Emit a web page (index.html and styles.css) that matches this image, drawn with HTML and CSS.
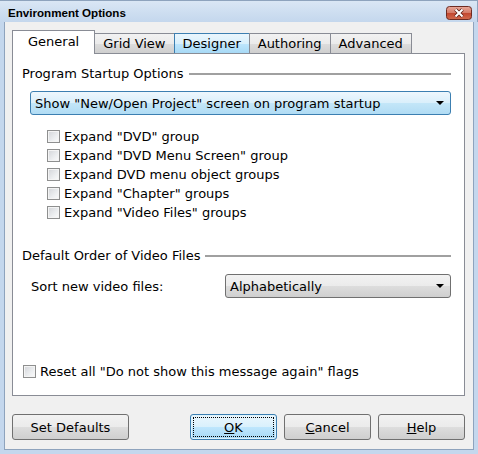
FILE: index.html
```html
<!DOCTYPE html>
<html>
	<head>
		<title>Environment Options</title>
		<link rel="stylesheet" href="styles.css">
	</head>
	<body>
		<div class="titlebar">
			<span class="title">Environment Options</span>
			<svg class="close" width="26" height="14" viewBox="0 0 26 14">
				<defs>
					<linearGradient id="red" x1="0" y1="0" x2="0" y2="1">
						<stop offset="0" stop-color="#e9a99b" />
						<stop offset="0.5" stop-color="#d47a66" />
						<stop offset="0.51" stop-color="#c2472f" />
						<stop offset="1" stop-color="#d26b4e" />
					</linearGradient>
				</defs>
				<rect x="0.5" y="0.5" width="25" height="13" rx="3" fill="url(#red)" stroke="#6d2b22" />
				<path d="M9.5 3.5 L16.5 10.5 M16.5 3.5 L9.5 10.5" stroke="#5e1f16" stroke-width="3.6" />
				<path d="M9.5 3.5 L16.5 10.5 M16.5 3.5 L9.5 10.5" stroke="#fff" stroke-width="2" />
			</svg>
		</div>
		<div class="frame">
			<div class="tabs">
				<div class="tab tab-active">General</div>
				<div class="tab">Grid View</div>
				<div class="tab tab-hot">Designer</div>
				<div class="tab">Authoring</div>
				<div class="tab">Advanced</div>
			</div>
			<div class="panel">
				<div class="group-head"><span>Program Startup Options</span><span class="rule"></span></div>
				<div class="combo combo-hot startup">
					<span>Show "New/Open Project" screen on program startup</span>
					<span class="arrow"></span>
				</div>
				<ul class="checks">
					<li class="check"><span class="box"></span>Expand "DVD" group</li>
					<li class="check"><span class="box"></span>Expand "DVD Menu Screen" group</li>
					<li class="check"><span class="box"></span>Expand DVD menu object groups</li>
					<li class="check"><span class="box"></span>Expand "Chapter" groups</li>
					<li class="check"><span class="box"></span>Expand "Video Files" groups</li>
				</ul>
				<div class="group-head second"><span>Default Order of Video Files</span><span class="rule"></span></div>
				<div class="sort-row">
					<span>Sort new video files:</span>
					<div class="combo sort">
						<span>Alphabetically</span>
						<span class="arrow"></span>
					</div>
				</div>
				<div class="check reset"><span class="box"></span>Reset all "Do not show this message again" flags</div>
			</div>
			<div class="footer">
				<button class="btn btn-wide">Set Defaults</button>
				<div class="btn-group">
					<button class="btn btn-default"><span class="focus"><u>O</u>K</span></button>
					<button class="btn"><u>C</u>ancel</button>
					<button class="btn"><u>H</u>elp</button>
				</div>
			</div>
		</div>
	</body>
</html>
```

FILE: styles.css
```css
html {
	height: 100%;
}
body {
	margin: 0;
	width: 478px;
	height: 454px;
	display: flex;
	flex-direction: column;
	font: 13px "DejaVu Sans", Verdana, sans-serif;
	color: #000;
	background: #f0f0f0;
	overflow: hidden;
}
.titlebar {
	height: 22px;
	box-sizing: border-box;
	flex-shrink: 0;
	display: flex;
	align-items: center;
	padding: 2px 6px 0 8px;
	background: linear-gradient(180deg, #dbe7f5 0%, #cfdff1 50%, #c4d7ed 100%);
	box-shadow: inset 0 1px #8ea3bd, inset -1px 0 #8ea3bd;
}
.title {
	font: bold 11.6px "Liberation Sans", Tahoma, sans-serif;
	flex-grow: 1;
}
.close {
	display: block;
	margin-top: 1px;
}
.frame {
	flex-grow: 1;
	display: flex;
	flex-direction: column;
	padding: 8px 9px 0 8px;
	border: solid #c4d7ed;
	border-width: 0 4px 4px 4px;
	box-shadow: inset 1px 0 #8ea3bd, inset -1px 0 #8ea3bd, inset 0 -1px #8ea3bd;
}
.tabs {
	display: flex;
	align-items: flex-end;
	height: 23px;
}
.tab {
	height: 19px;
	line-height: 19px;
	padding: 0 8px;
	border: 1px solid #898c95;
	border-bottom: none;
	margin-left: -1px;
	background: linear-gradient(180deg, #f2f2f2 0%, #ebebeb 50%, #dddddd 51%, #cfcfcf 100%);
}
.tab-active {
	position: relative;
	z-index: 1;
	height: 23px;
	line-height: 22px;
	margin-left: 0;
	margin-bottom: -1px;
	padding: 0 15px;
	background: #fff;
}
.tab-hot {
	border-color: #3c7fb1;
	background: linear-gradient(180deg, #eaf6fd 0%, #d9f0fc 50%, #bee6fd 51%, #a7d9f5 100%);
}
.panel {
	height: 343px;
	box-sizing: border-box;
	display: flex;
	flex-direction: column;
	padding: 12px 13px 14px 9px;
	border: 1px solid #898c95;
	background: #fff;
}
.group-head {
	display: flex;
	align-items: center;
	height: 15px;
}
.group-head.second {
	margin-top: 26px;
}
.rule {
	flex-grow: 1;
	margin-left: 5px;
	height: 2px;
	background: #a0a0a0;
}
.combo {
	display: flex;
	align-items: center;
	height: 24px;
	box-sizing: border-box;
	padding: 0 6px 0 4px;
	border: 1px solid #707070;
	border-radius: 3px;
	background: linear-gradient(180deg, #f2f2f2 0%, #ebebeb 50%, #dddddd 51%, #cfcfcf 100%);
}
.combo > span:first-child {
	flex-grow: 1;
}
.combo-hot {
	border-color: #3c7fb1;
	background: linear-gradient(180deg, #eef7fd 0%, #d9effb 50%, #c3e6f8 51%, #b1dcf4 100%);
}
.startup {
	margin: 10px 0 0 8px;
}
.arrow {
	width: 0;
	height: 0;
	border-left: 4px solid transparent;
	border-right: 4px solid transparent;
	border-top: 4px solid #000;
}
.checks {
	list-style: none;
	margin: 12px 0 0 25px;
	padding: 0;
}
.check {
	display: flex;
	align-items: center;
	height: 19px;
}
.box {
	width: 13px;
	height: 13px;
	box-sizing: border-box;
	margin-right: 4px;
	border: 1px solid #8e8f8f;
	box-shadow: inset 0 0 0 1px #f4f4f4;
	background: linear-gradient(135deg, #d2d4d8 0%, #eceef0 60%, #fbfbfb 100%);
}
.sort-row {
	display: flex;
	align-items: center;
	justify-content: space-between;
	margin: 11px 0 0 9px;
}
.sort {
	width: 226px;
}
.reset {
	margin-top: auto;
	margin-left: 1px;
}
.footer {
	display: flex;
	margin-top: 18px;
}
.btn-group {
	display: flex;
	gap: 7px;
	margin-left: auto;
}
.btn {
	width: 87px;
	height: 26px;
	padding: 0;
	font: 13px "DejaVu Sans", Verdana, sans-serif;
	color: #000;
	border: 1px solid #707070;
	border-radius: 3px;
	background: linear-gradient(180deg, #f2f2f2 0%, #ebebeb 50%, #dddddd 51%, #cfcfcf 100%);
}
.btn-wide {
	width: 117px;
}
.btn-default {
	border-color: #3c7fb1;
	padding: 2px;
	background: linear-gradient(180deg, #eaf6fd 0%, #d9f0fc 50%, #bee6fd 51%, #a7d9f5 100%);
	box-shadow: inset 0 0 0 1px #def3fc;
}
.focus {
	display: flex;
	align-items: center;
	justify-content: center;
	height: 100%;
	border: 1px dotted #000;
	box-sizing: border-box;
}
```
